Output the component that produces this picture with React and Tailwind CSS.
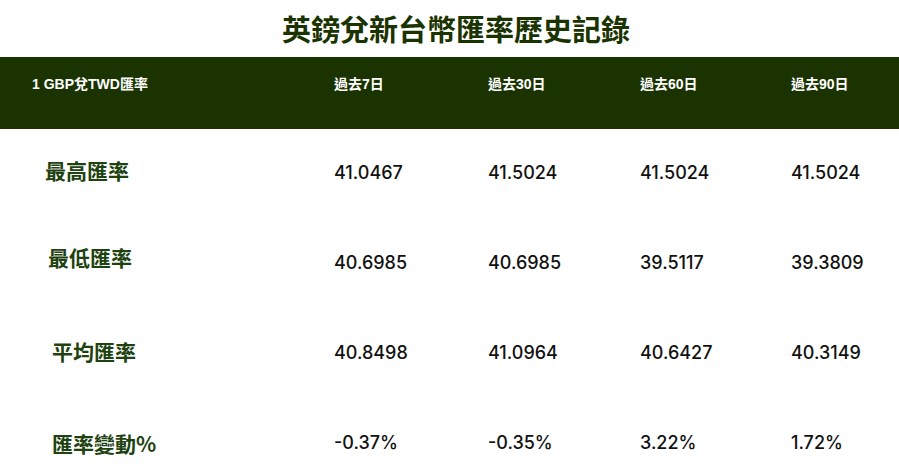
import React from 'react';

const cjk = '"Noto Sans CJK TC", "Noto Sans", sans-serif';

const periods = ['過去7日', '過去30日', '過去60日', '過去90日'];

const rows = [
  { label: '最高匯率', labelCls: 'pt-[26px] pl-[45px]', values: ['41.0467', '41.5024', '41.5024', '41.5024'] },
  { label: '最低匯率', labelCls: 'pt-[23px] pl-[48px]', values: ['40.6985', '40.6985', '39.5117', '39.3809'] },
  { label: '平均匯率', labelCls: 'pt-[27px] pl-[52px]', values: ['40.8498', '41.0964', '40.6427', '40.3149'] },
  { label: '匯率變動%', labelCls: 'pt-[29px] pl-[52px]', values: ['-0.37%', '-0.35%', '3.22%', '1.72%'] },
];

const cols = 'grid grid-cols-[334px_154px_152px_151px_1fr]';

export default function App() {
  return (
    <div className="w-[899px] h-[469px] bg-white overflow-hidden">
      <div
        className="h-[57px] flex items-center justify-center pl-[13px] text-[29px] font-bold text-[#1a3300] leading-none"
        style={{ fontFamily: cjk }}
      >
        英鎊兌新台幣匯率歷史記錄
      </div>

      {/* header band */}
      <div
        className={`${cols} h-[72px] bg-[#1a3300] text-white text-[14px] font-bold`}
        style={{ fontFamily: '"Liberation Sans", "Noto Sans CJK TC", sans-serif' }}
      >
        <div className="pl-[32px] pt-[17px]">1 GBP兌TWD匯率</div>
        {periods.map(p => (
          <div key={p} className="pt-[17px]">{p}</div>
        ))}
      </div>

      {rows.map(r => (
        <div key={r.label} className={`${cols} h-[90px]`}>
          <div
            className={`${r.labelCls} text-[21px] leading-[30px] font-bold text-[#1e4210]`}
            style={{ fontFamily: cjk }}
          >
            {r.label}
          </div>
          {r.values.map((v, i) => (
            <div
              key={i}
              className="pt-[30px] text-[18px] leading-[27px] font-medium text-[#111]"
              style={{ fontFamily: 'Inter, sans-serif' }}
            >
              {v}
            </div>
          ))}
        </div>
      ))}
    </div>
  );
}
